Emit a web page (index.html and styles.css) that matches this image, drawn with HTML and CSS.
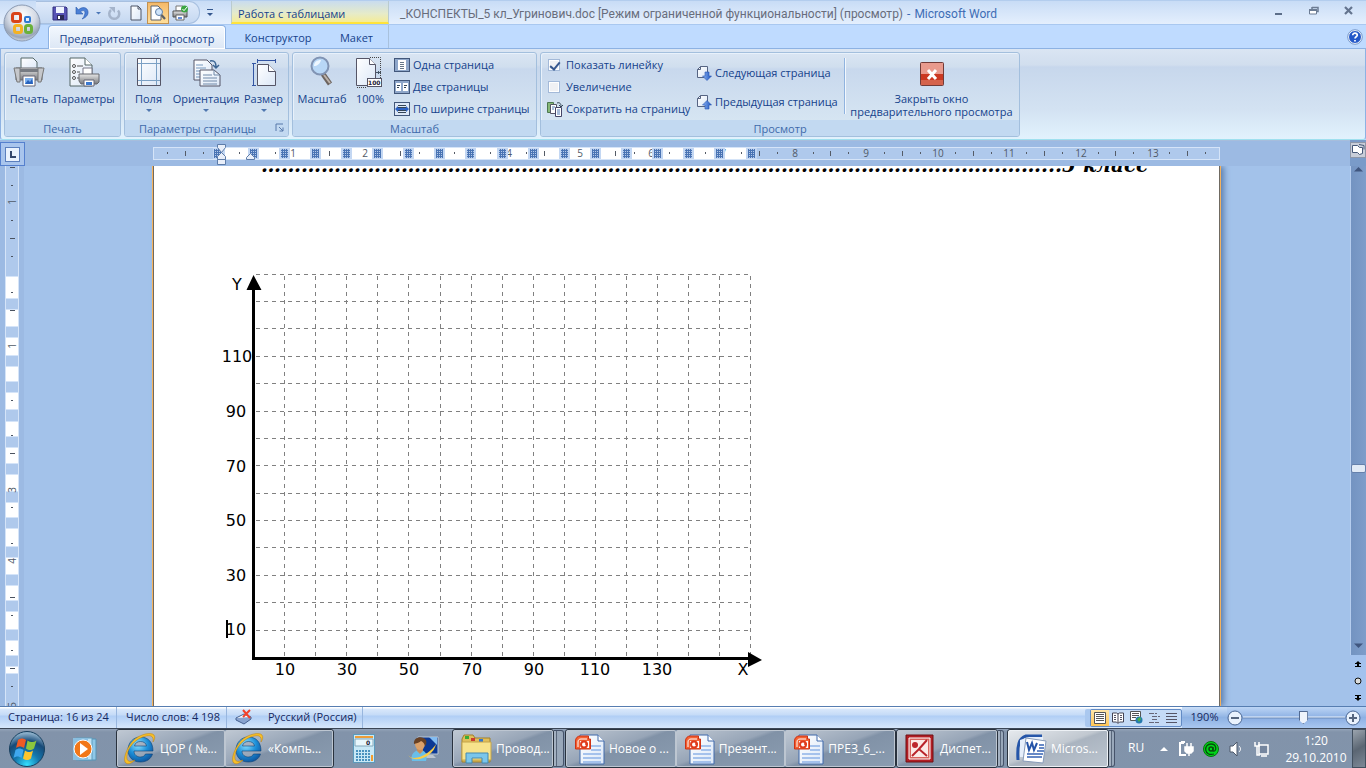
FILE: index.html
```html
<!DOCTYPE html>
<html lang="ru">
<head>
<meta charset="utf-8">
<title>_КОНСПЕКТЫ_5 кл_Угринович.doc - Microsoft Word</title>
<link rel="stylesheet" href="styles.css">
</head>
<body>
<svg class="defs" aria-hidden="true">
  <defs>
    <linearGradient id="paper" x1="0" y1="0" x2="1" y2="1"><stop offset="0" stop-color="#fff"/><stop offset="1" stop-color="#dbe7f7"/></linearGradient>
    <linearGradient id="metal" x1="0" y1="0" x2="0" y2="1"><stop offset="0" stop-color="#e8e8e8"/><stop offset="1" stop-color="#77797d"/></linearGradient>
    <linearGradient id="arrowBlue" x1="0" y1="0" x2="1" y2="0"><stop offset="0" stop-color="#8db6f5"/><stop offset="1" stop-color="#1d52bd"/></linearGradient>
    <radialGradient id="orb" cx=".5" cy=".3" r=".75"><stop offset="0" stop-color="#fff"/><stop offset=".5" stop-color="#d5dbe6"/><stop offset=".8" stop-color="#99a5b8"/><stop offset="1" stop-color="#eef3fa"/></radialGradient>
    <radialGradient id="startOrb" cx=".5" cy=".95" r=".9"><stop offset="0" stop-color="#35e0ff"/><stop offset=".4" stop-color="#1477ad"/><stop offset=".75" stop-color="#174a78"/><stop offset="1" stop-color="#8aaec9"/></radialGradient>
    <radialGradient id="ieBlue" cx=".4" cy=".3" r=".8"><stop offset="0" stop-color="#8fe3ff"/><stop offset=".5" stop-color="#1d8fd8"/><stop offset="1" stop-color="#0b4a94"/></radialGradient>
    <symbol id="ie" viewBox="0 0 32 32">
      <path d="M29 18H10c0 4 3 6 6.500 6 2.500 0 4-1 5-3h7c-1.500 5-6 8-12 8C8.500 29 4 24 4 17S9 4 16.500 4 29 9 29 18zM10.500 13h12c-.5-3-2.800-4.500-6-4.500s-5.500 1.500-6 4.500z" fill="url(#ieBlue)" stroke="#0b4275" stroke-width=".6"/>
      <path d="M11 6C17 1 27-1 30 2c1.500 2 .5 5-1 7 .5-3 0-5-2-6-3-1-9 .5-14 4C6 12 2 20 3 26c1 3 4 3 8 1-4 4-8 5-10 2C-1 24 4 12 11 6z" fill="#f7bf28" stroke="#b97f10" stroke-width=".5"/>
    </symbol>
    <symbol id="ppt" viewBox="0 0 32 32">
      <path d="M7 2h18l6 6v23H7z" fill="url(#paper)" stroke="#3e68aa"/><path d="M25 2v6h6" fill="#fff" stroke="#3e68aa"/>
      <path d="M18 13h10M18 17h10M10 21h18M10 25h18M10 29h18" stroke="#8eb3e8" stroke-width="1.500"/>
      <path d="M2.500 16V8c0-3 2-5 5-5h8v3h2v10z" fill="#f36133" stroke="#ce3214"/><path d="M5 14V9c0-2 1-3 3-3h6" fill="none" stroke="#fff"/>
      <path d="M7 8h9v7H7z" fill="#fff"/><circle cx="11" cy="11.500" r="3" fill="none" stroke="#e03c1c" stroke-width="2"/><path d="M12 11h3" stroke="#e03c1c" stroke-width="1.500"/>
    </symbol>
  </defs>
</svg>

<header class="title-row">
  <div class="qat">
    <button class="qb" aria-label="Сохранить"><svg width="16" height="16"><path d="M1 2h13l1 1v12H1z" fill="#5753b5" stroke="#33307f"/><path d="M4 2h8v6H4z" fill="#eef3ff"/><path d="M5 10h7v5H5z" fill="#2b2a55"/><path d="M6 11h2v3H6z" fill="#fff"/></svg></button>
    <button class="qb" aria-label="Отменить"><svg width="16" height="16"><path d="M2 2v7h7L6.500 6.800C10 4 12 6.500 10.500 10 10 12 9 13 8 14c4-1.500 6.500-4 6-7.500C13.500 2.500 8.500 1 4.500 4.800z" fill="#4b80d6" stroke="#2a58aa" stroke-width=".6"/></svg></button>
    <button class="qb narrow" aria-label="Список отмены"><svg width="7" height="16"><path d="M1 7h5L3.500 9.500z" fill="#4d78b8"/></svg></button>
    <button class="qb" aria-label="Повторить"><svg width="16" height="16"><path d="M5 5a5 5 0 1 0 7 .5" fill="none" stroke="#a5b4cb" stroke-width="2.500"/><path d="M3 2h6v6z" fill="#a5b4cb"/></svg></button>
    <button class="qb" aria-label="Создать"><svg width="16" height="16"><path d="M3 1h7l3 3v11H3z" fill="url(#paper)" stroke="#4d5566"/><path d="M10 1v3h3" fill="none" stroke="#4d5566"/></svg></button>
    <button class="qb pressed" aria-label="Предварительный просмотр"><svg width="16" height="16"><path d="M1 1h7l3 3v11H1z" fill="#fff" stroke="#5b6370"/><circle cx="9" cy="7" r="3.500" fill="#cfe4fa" stroke="#5e7ea8"/><path d="M11.500 10l3.500 4" stroke="#5e6064" stroke-width="2.200"/></svg></button>
    <button class="qb" aria-label="Быстрая печать"><svg width="17" height="16"><path d="M4 1h7v5H4z" fill="#fff" stroke="#777"/><path d="M1 6h14v6H1z" fill="url(#metal)" stroke="#555"/><path d="M4 10h8v5H4z" fill="#fff" stroke="#666"/><path d="M6 12h4v2H6z" fill="#638bd6"/><circle cx="12.500" cy="4" r="3.500" fill="#3ba542"/><path d="M10.500 4l1.500 1.700L15 2" fill="none" stroke="#fff"/></svg></button>
  </div>
  <button class="qat-more" aria-label="Настройка панели"><svg width="8" height="10"><path d="M1 1.500h6" stroke="#34578e"/><path d="M1 5h6L4 8z" fill="#34578e"/></svg></button>
  <div class="context-title">Работа с таблицами</div>
  <div class="doc-title"><span class="doc-name">_КОНСПЕКТЫ_5 кл_Угринович.doc [Режим ограниченной функциональности] (просмотр)</span><span>-</span><span>Microsoft Word</span></div>
  <div class="win-controls">
    <button aria-label="Свернуть"><svg width="12" height="12"><path d="M2 9h7" stroke="#5c6e89" stroke-width="2"/></svg></button>
    <button aria-label="Восстановить"><svg width="12" height="12"><path d="M4 2.500h6v4H8.500M4 2v2" fill="none" stroke="#6c7c94" stroke-width="1.500"/><path d="M1.500 4.500h7v4.500h-7z" fill="#fff" stroke="#6c7c94"/><path d="M1 5h8" stroke="#6c7c94" stroke-width="2"/></svg></button>
    <button aria-label="Закрыть"><svg width="12" height="12"><path d="M2 2l7 7M9 2l-7 7" stroke="#64748e" stroke-width="2.200"/></svg></button>
  </div>
  <button class="office" aria-label="Кнопка Office"><svg width="38" height="38" viewBox="0 0 38 38"><circle cx="19" cy="19" r="18" fill="url(#orb)" stroke="#8a9ab3"/>
    <g fill="none" stroke-width="3"><rect x="9.500" y="9.500" width="8" height="8" rx="2" stroke="#d9441a"/><rect x="22" y="13" width="5" height="5" rx="1" stroke="#2f7ad4" stroke-width="2"/><rect x="11.500" y="21.500" width="7" height="7" rx="2" stroke="#f4b223"/><rect x="22.500" y="21.500" width="6" height="7" rx="2" stroke="#6ab13a"/></g></svg></button>
</header>

<nav class="tabs">
  <button class="tab active">Предварительный просмотр</button>
  <div class="context-tabs"><button class="tab t2">Конструктор</button><button class="tab t3">Макет</button></div>
  <button class="help" aria-label="Справка"><svg width="16" height="16"><circle cx="8" cy="8" r="6.500" fill="#2458c8" stroke="#fff"/><circle cx="8" cy="8" r="7.300" fill="none" stroke="#5f7fb5" stroke-width=".7"/><path d="M5.700 6.300C5.700 3.300 10.500 3.600 10.300 6.300 10.200 7.800 8 7.800 8 9.500M8 11v1.500" fill="none" stroke="#fff" stroke-width="1.700"/></svg></button>
</nav>

<section class="ribbon">
  <div class="group g-print">
    <div class="gbody">
      <button class="big w48"><svg width="32" height="32"><path d="M8 2h12l4 4v8H8z" fill="url(#paper)" stroke="#566"/><path d="M3 12h26v12H3z" fill="url(#metal)" stroke="#66696f"/><path d="M1 12h6v14H4zM25 12h6l-3 14h-3z" fill="#c5c7cb" stroke="#777"/><path d="M7 13h18v3H7z" fill="#777b82"/><path d="M10 20h12v10H10z" fill="#fff" stroke="#667"/><path d="M12 22h8v6h-8z" fill="#7cb0ee"/><path d="M12 28l3-4 2 2 2-3 1 5z" fill="#2862bd"/></svg><span>Печать</span></button>
      <button class="big w64"><svg width="32" height="32"><path d="M2 2h15l7 7v21H2z" fill="url(#paper)" stroke="#566"/><path d="M17 2v7h7" fill="#fff" stroke="#566"/><g fill="none" stroke="#555"><circle cx="6" cy="10" r="1.500"/><circle cx="6" cy="16" r="1.500"/><circle cx="6" cy="22" r="1.500"/><path d="M9 10h6M9 16h3M9 22h2"/></g><path d="M15 12h9v8h-9z" fill="#fff" stroke="#778"/><path d="M11 18h20v8l-2 2H13l-2-3z" fill="url(#metal)" stroke="#66696f"/><path d="M16 24h10v6H16z" fill="#fff" stroke="#667"/><path d="M18 26h6v3h-6z" fill="#3b79d0"/></svg><span>Параметры</span></button>
    </div>
    <div class="glabel">Печать</div>
  </div>
  <div class="group g-page">
    <div class="gbody">
      <button class="big w46"><svg width="32" height="32"><path d="M4.500 2.500h23v27h-23z" fill="url(#paper)" stroke="#556"/><path d="M8.500 3v26M23.500 3v26M5 7.500h22M5 24.500h22" stroke="#7ba0c4"/></svg><span>Поля</span><i class="drop"></i></button>
      <button class="big w68"><svg width="32" height="32"><path d="M4 4h13l5 5v15H4z" fill="url(#paper)" stroke="#556"/><path d="M6 9h7M6 12h10M6 15h10M6 18h5M6 21h5" stroke="#7597bd"/><path d="M10 14h14l6 5v11H10z" fill="url(#paper)" stroke="#556"/><path d="M24 14v5h6M13 19h9M13 22h14M13 25h14M13 28h14" fill="none" stroke="#7089a8"/><path d="M20 5c5-1 6 2 6 6M23 9l3 3 3-3" fill="none" stroke="#3c6694" stroke-width="1.500"/></svg><span>Ориентация</span><i class="drop"></i></button>
      <button class="big w46"><svg width="32" height="32"><path d="M9.500 8.500h11l7 7v14h-18z" fill="url(#paper)" stroke="#556"/><path d="M20.500 8.500v7h7" fill="#fff" stroke="#556"/><path d="M9 4.500h19M9.500 3v4M27.500 3v4M5.500 8v21M4 7.500h4M4 29.500h4" stroke="#3355a3"/></svg><span>Размер</span><i class="drop"></i></button>
    </div>
    <div class="glabel with-launcher">Параметры страницы<button class="launcher" aria-label="Параметры страницы"><svg width="9" height="9"><path d="M1 8V1h7M4 4l4 4M8 4.500V8H4.500" fill="none" stroke="#5678aa"/></svg></button></div>
  </div>
  <div class="group g-zoom">
    <div class="gbody">
      <button class="big w58"><svg width="32" height="32"><path d="M17 18l7 10" stroke="#6d645f" stroke-width="5"/><path d="M18 19l6 8" stroke="#bdb3aa" stroke-width="2"/><circle cx="14" cy="10" r="8.500" fill="#b8d7f6" stroke="#8194b4" stroke-width="2"/><path d="M8 10c0-4 3-6 7-6-1 4-4 6-7 6z" fill="#eef7ff"/></svg><span>Масштаб</span></button>
      <button class="big w38"><svg width="32" height="32"><path d="M2.500 2.500h13l6 6v21h-19z" fill="url(#paper)" stroke="#556"/><path d="M15.500 2.500v6h6" fill="#fff" stroke="#556"/><path d="M16 1.500h10.500V22M3 31.500h10" fill="none" stroke="#444" stroke-dasharray="1 1"/><path d="M22 16.500h5M24.500 15v3" stroke="#456"/><rect x="13.500" y="22.500" width="14" height="8" fill="#fff" stroke="#556"/><text class="mini" x="14" y="29">100</text></svg><span>100%</span></button>
      <div class="stack">
        <button class="small"><svg width="16" height="16"><rect x=".5" y="1.500" width="15" height="13" fill="#8fa7ca" stroke="#42577a"/><path d="M4 3h8v10H4z" fill="#fff"/><path d="M6 5.500h4M6 7.500h4M6 9.500h4M6 11.500h4" stroke="#678"/></svg>Одна страница</button>
        <button class="small"><svg width="16" height="16"><rect x=".5" y="1.500" width="15" height="13" fill="#8fa7ca" stroke="#42577a"/><path d="M2 4h5v8H2zM9 4h5v8H9z" fill="#fff"/><path d="M3 6.500h3M3 8.500h2M10 6.500h3M10 8.500h2" stroke="#345"/></svg>Две страницы</button>
        <button class="small"><svg width="16" height="16"><rect x=".5" y="1.500" width="15" height="13" fill="#dce7f6" stroke="#42577a"/><path d="M4 4.500h8M4 6.500h8M4 9.500h8M4 11.500h8" stroke="#345"/><path d="M1 8l3-3v2h8V5l3 3-3 3V9H4v2z" fill="#2c61c2"/></svg>По ширине страницы</button>
      </div>
    </div>
    <div class="glabel">Масштаб</div>
  </div>
  <div class="group g-view">
    <div class="gbody">
      <div class="stack checks">
        <label class="small"><input type="checkbox" checked>Показать линейку</label>
        <label class="small"><input type="checkbox">Увеличение</label>
        <button class="small"><svg width="16" height="16"><path d="M.5 1.500h6v10h-6z" fill="#87b878" stroke="#4d7850"/><path d="M3.500 3.500h6v9h-6z" fill="#fff" stroke="#556"/><path d="M8.500 6.500h6v9h-6z" fill="#fff" stroke="#446"/><path d="M5 6h3M5 8h2M10 9h3M10 11h3M10 13h3" stroke="#527ab6"/><path d="M10 2c3-1 4 1 4 3M12 4l2 2 2-2" fill="none" stroke="#345"/></svg>Сократить на страницу</button>
      </div>
      <div class="stack pages">
        <button class="small"><svg width="16" height="16"><path d="M4.500 1.500h7v11h-10v-8z" fill="url(#paper)" stroke="#566482"/><path d="M4.500 1.500v3h-3" fill="none" stroke="#566482"/><path d="M9 7h4v4h2.500L11 15.500 6.500 11H9z" fill="url(#arrowBlue)" stroke="#2756b3" stroke-width=".6"/></svg>Следующая страница</button>
        <button class="small"><svg width="16" height="16"><path d="M4.500 1.500h7v11h-10v-8z" fill="url(#paper)" stroke="#566482"/><path d="M4.500 1.500v3h-3" fill="none" stroke="#566482"/><path d="M9 15h4v-4h2.500L11 6.500 6.500 11H9z" fill="url(#arrowBlue)" stroke="#2756b3" stroke-width=".6"/></svg>Предыдущая страница</button>
      </div>
      <div class="vsep"></div>
      <button class="big close"><svg width="32" height="32" viewBox="0 0 32 32"><rect x="4.500" y="6.500" width="23" height="23" rx="1" fill="#e99a8d" stroke="#713b38"/><path d="M5 18h22v11H5z" fill="#cb3821"/><path d="M5 24h22v5H5z" fill="#dc8069" opacity=".6"/><path d="M12 14l8 9M20 14l-8 9" stroke="#fff" stroke-width="3"/></svg><span>Закрыть окно<br>предварительного просмотра</span></button>
    </div>
    <div class="glabel">Просмотр</div>
  </div>
</section>

<main class="work">
  <button class="tabstop" aria-label="Позиция табуляции"><svg width="15" height="15"><rect x=".5" y=".5" width="14" height="14" fill="#eaf2fd" stroke="#5b7fbd"/><path d="M6 4v6h5" fill="none" stroke="#34476c" stroke-width="2"/></svg></button>
  <div class="hruler">
    <svg width="1067" height="26" viewBox="153 140 1067 26">
      <defs><pattern id="cells" width="2" height="2" patternUnits="userSpaceOnUse"><rect width="2" height="2" fill="#b4caea"/><path d="M0 .5h2M.5 0v2" stroke="#4a74b4" stroke-width="1"/></pattern></defs>
      <rect x="153.500" y="147.500" width="1066" height="12" fill="#afc9ec" stroke="#d5e4f8"/>
      <path d="M221 148h530v11H221z" fill="#fff"/>
      <path d="M167.500 152v2M203.500 152v2M239.500 152v2M275.500 152v2M419.500 152v2M454.500 152v2M490.500 152v2M526.500 152v2M562.500 152v2M598.500 152v2M634.500 152v2M669.500 152v2M705.500 152v2M741.500 152v2M777.500 152v2M813.500 152v2M848.500 152v2M884.500 152v2M920.500 152v2M955.500 152v2M991.500 152v2M1026.500 152v2M1062.500 152v2M1098.500 152v2M1133.500 152v2M1169.500 152v2M1205.500 152v2M185.500 151v5M329.500 151v5M400.500 151v5M472.500 151v5M544.500 151v5M615.500 151v5M759.500 151v5M830.500 151v5M902.500 151v5M973.500 151v5M1044.500 151v5M1115.500 151v5M1187.500 151v5" stroke="#555b66"/>
      <g class="num"><text x="293" y="157">1</text><text x="365" y="157">2</text><text x="437" y="157">3</text><text x="509" y="157">4</text><text x="580" y="157">5</text><text x="651" y="157">6</text><text x="723" y="157">7</text><text x="795" y="157">8</text><text x="866" y="157">9</text><text x="938" y="157">10</text><text x="1009" y="157">11</text><text x="1081" y="157">12</text><text x="1153" y="157">13</text></g>
      <path d="M213 153.500h12M248 153.500h11M279 153.500h11M310 153.500h11M341 153.500h11M372 153.500h11M403 153.500h11M434 153.500h11M465 153.500h11M497 153.500h11M528 153.500h11M559 153.500h11M590 153.500h11M621 153.500h11M652 153.500h11M683 153.500h11M714 153.500h11M746 153.500h11" stroke="#c3d7f3" stroke-width="11"/>
      <path d="M214 153.500h8M250 153.500h7M281 153.500h7M312 153.500h7M343 153.500h7M374 153.500h7M405 153.500h7M436 153.500h7M467 153.500h7M499 153.500h7M530 153.500h7M561 153.500h7M592 153.500h7M623 153.500h7M654 153.500h7M685 153.500h7M716 153.500h7M748 153.500h7" stroke="url(#cells)" stroke-width="9"/>
      <g fill="#e9effa" stroke="#5d7ca9"><path d="M217.500 144.500h8v3l-4 5-4-5zM217.500 159.500v-3l4-4 4 4v3zM217.500 159.500h8v5h-8zM246.500 159.500v-2l4-4 4 4v2z"/></g>
    </svg>
  </div>
  <div class="corner"><button aria-label="Линейка"><svg width="16" height="16"><rect x=".5" y=".5" width="15" height="15" fill="#c9ced9" stroke="#8d96a8"/><path d="M2.500 3.500h5l2 2h3v6l-3 1-2-2h-5z" fill="#fff" stroke="#465878"/><path d="M9 2.500l5 1v4" fill="none" stroke="#465878"/></svg></button></div>

  <div class="vruler">
    <svg width="24" height="560" viewBox="0 166 24 560">
      <path d="M5.500 166v560M18.500 166v560" stroke="#d5e4f8"/><path d="M6 166h12v560H6z" fill="#afc9ec"/>
      <path d="M12 276v23M12 309v18M12 337v19M12 366v16M12 392v18M12 421v16M12 447v17M12 474v18M12 502v16M12 528v19M12 557v18M12 585v16M12 611v19M12 640v16M12 666v8" stroke="#d5e4f8" stroke-width="12"/>
      <path d="M12 277v21M12 310v16M12 338v17M12 367v14M12 393v16M12 422v14M12 448v15M12 475v16M12 503v14M12 529v17M12 558v16M12 586v14M12 612v17M12 641v14M12 667v6" stroke="#fff" stroke-width="12"/>
      <path d="M10 167.500h5M11 185.500h2M11 220.500h2M10 238.500h5M11 256.500h2M11 292.500h2M10 310.500h5M11 400.500h2M11 435.500h2M10 453.500h5M11 507.500h2M11 543.500h2M10 597.500h5M11 615.500h2M11 650.500h2M10 668.500h5M11 686.500h2" stroke="#4b5360"/>
      <g class="num"><text transform="translate(16 202) rotate(-90)">1</text><text transform="translate(16 346) rotate(-90)">1</text><text transform="translate(16 490) rotate(-90)">3</text><text transform="translate(16 561) rotate(-90)">4</text><text transform="translate(16 705) rotate(-90)">5</text></g>
    </svg>
  </div>
  <div class="canvas">
    <article class="page">
      <p class="heading">………………………………………………………………………………………………………...5 класс</p>
      <svg class="chart" width="548" height="416" viewBox="220 268 548 416" role="img" aria-label="Координатная сетка">
        <path d="M256 274.500h495M256 301.500h495M256 328.500h495M256 356.500h495M256 383.500h495M256 411.500h495M256 438.500h495M256 465.500h495M256 493.500h495M256 520.500h495M256 547.500h495M256 575.500h495M256 602.500h495M256 630.500h495M284.500 276v381M315.500 276v381M346.500 276v381M377.500 276v381M408.500 276v381M440.500 276v381M471.500 276v381M502.500 276v381M533.500 276v381M564.500 276v381M595.500 276v381M626.500 276v381M657.500 276v381M688.500 276v381M719.500 276v381M750.500 276v381" fill="none" stroke="#808080" stroke-dasharray="4 4"/>
        <path d="M253.500 284v374.500H750" fill="none" stroke="#000" stroke-width="3"/><path d="M253.500 275l8 15h-15zM762 660l-14-8v15z"/>
        <g class="lab"><text x="237" y="290">Y</text><text x="237" y="362">110</text><text x="236" y="417">90</text><text x="236" y="472">70</text><text x="236" y="526">50</text><text x="236" y="581">30</text><text x="236" y="635">10</text>
        <text x="285" y="675">10</text><text x="347" y="675">30</text><text x="409" y="675">50</text><text x="472" y="675">70</text><text x="534" y="675">90</text><text x="595" y="675">110</text><text x="657" y="675">130</text><text x="743" y="675">X</text></g>
        <path d="M227 620v18" stroke="#000" stroke-width="2"/>
      </svg>
    </article>
  </div>
  <div class="vscroll">
    <div class="track">
      <button class="arr" aria-label="Вверх"><svg width="10" height="6"><path d="M0 5.500h9L4.500 1z" fill="#40567f"/></svg></button>
      <div class="above"></div><div class="thumb"></div><div class="below"></div>
      <button class="arr" aria-label="Вниз"><svg width="10" height="6"><path d="M0 .5h9L4.500 5z" fill="#40567f"/></svg></button>
    </div>
    <button class="nav" aria-label="Предыдущая"><svg width="8" height="8"><path d="M2 3h4L4 1zM1 3h6v1H1zM3 4h2v2H3zM1 6h6v1H1z"/></svg></button>
    <button class="nav" aria-label="Выбор объекта"><svg width="8" height="8"><circle cx="4" cy="4" r="3" fill="#ddd" stroke="#111"/></svg></button>
    <button class="nav" aria-label="Следующая"><svg width="8" height="8"><path d="M1 1h6v1H1zM3 2h2v2H3zM1 4h6v1H1zM2 5h4L4 7z"/></svg></button>
  </div>
</main>

<footer class="status">
  <span class="s1">Страница: 16 из 24</span><span class="s2">Число слов: 4 198</span>
  <span class="s3"><svg width="18" height="16"><path d="M1 9l8-4 7 3-7 5z" fill="#fff" stroke="#46608f"/><path d="M1 9v2l8 4 7-5V8" fill="#88a3cf" stroke="#46608f"/><path d="M8 1l7 8M15 1L8 8" stroke="#f2432c" stroke-width="2"/></svg></span><span class="s4">Русский (Россия)</span>
  <div class="views">
    <button class="on" aria-label="Разметка"><svg width="12" height="12"><path d="M.5.5h11v11H.5z" fill="#fff" stroke="#555"/><path d="M2 2.500h8M2 4.500h8M2 6.500h8M2 8.500h8" stroke="#555"/></svg></button>
    <button aria-label="Чтение"><svg width="12" height="12"><path d="M.5 1h4L6 2l1.500-1h4v9h-4L6 11.500 4.500 10h-4zM6 2v9" fill="#fff" stroke="#445"/><path d="M2 3.500h2M2 5.500h2M2 7.500h2M8 3.500h2M8 5.500h2M8 7.500h2" stroke="#556"/></svg></button>
    <button aria-label="Веб"><svg width="13" height="13"><path d="M.5.5h10v9H.5z" fill="#fff" stroke="#555"/><path d="M2 2.500h7M2 4.500h7M2 6.500h4" stroke="#555"/><circle cx="9" cy="9" r="3.500" fill="#2479ae"/><path d="M7 8l3-2 1 2-2 3z" fill="#49b24a"/></svg></button>
    <button aria-label="Структура"><svg width="12" height="12"><path d="M1 1.500h8M4 4.500h8M4 7.500h6M1 10.500h10" stroke="#667" stroke-dasharray="5 1"/></svg></button>
    <button aria-label="Черновик"><svg width="12" height="12"><path d="M0 1.500h11M0 4.500h11M0 7.500h11M0 10.500h11" stroke="#556"/></svg></button>
  </div>
  <span class="pct">190%</span>
  <button class="round" aria-label="Уменьшить"><svg width="16" height="16"><circle cx="8" cy="8" r="7" fill="#e9f2fd" stroke="#486694"/><path d="M4 8h8" stroke="#56667f" stroke-width="2"/></svg></button>
  <input class="slider" type="range" min="0" max="100" value="60" aria-label="Масштаб">
  <button class="round" aria-label="Увеличить"><svg width="16" height="16"><circle cx="8" cy="8" r="7" fill="#e9f2fd" stroke="#486694"/><path d="M4 8h8M8 4v8" stroke="#56667f" stroke-width="2"/></svg></button>
</footer>

<div class="taskbar">
  <button class="start" aria-label="Пуск"><svg width="38" height="38" viewBox="0 0 38 38"><circle cx="19" cy="19" r="17.500" fill="url(#startOrb)" stroke="#18405f"/><path d="M10 10c3-2 5-2 8 0l-2 8c-3-2-5-2-8 0z" fill="#ef5a24"/><path d="M19.500 10.500c3 2 6 2 9 0l-2.500 8c-3 2-5 2-8 0z" fill="#8cc63e"/><path d="M7.500 20c3-2 5-2 8 0l-2 8c-3-2-5-2-8 0z" fill="#3fa7ee"/><path d="M17 20.500c3 2 5 2 8 0l-2 8c-3 2-5 2-8 0z" fill="#fdc52c"/></svg></button>
  <button class="quick q1" aria-label="Проигрыватель"><svg width="28" height="28"><path d="M8 4h17v21H8z" fill="#8fc8e8" stroke="#5793b5"/><path d="M5 3h16v22H5z" fill="#bfe3f5" stroke="#5f9cbd"/><path d="M2 3h15v22H2z" fill="#8abfe0"/><circle cx="12" cy="14" r="9" fill="#f27718" stroke="#fff"/><path d="M9 8l8 6-8 6z" fill="#fff"/></svg></button>
  <div class="tgroup w218"><button class="task"><svg width="32" height="32"><use href="#ie"/></svg><span>ЦОР ( №...</span></button><button class="task"><svg width="32" height="32"><use href="#ie"/></svg><span>«Компь...</span></button></div>
  <button class="quick q2" aria-label="Калькулятор"><svg width="24" height="32"><rect x="1.500" y="1.500" width="21" height="28" fill="#c8e8f6" stroke="#5c9abc"/><path d="M3 3h18v2H3z" fill="#ed9d38"/><path d="M3 6h18v7H3z" fill="#e9f7fc" stroke="#82a7ba"/><text class="mini" x="14" y="12">0</text><path d="M4 18h14M4 21h14M4 24h14M4 27h14" stroke="#4a92bf" stroke-width="2" stroke-dasharray="2 1"/><path d="M20 22v6" stroke="#f39d2e" stroke-width="2"/></svg></button>
  <button class="quick q3" aria-label="Пользователь"><svg width="32" height="28"><path d="M11 2h20v17H11z" fill="#0b3894" stroke="#bac6d4"/><path d="M22 2l8 8V2z" fill="#83bdf2"/><path d="M20 20h6l3 3H18z" fill="#bcc5cf"/><path d="M5 26c-2-7 3-11 8-11s8 4 6 11z" fill="#69bee9"/><path d="M10 12h6v4l-3 3-3-3z" fill="#c98d58"/><ellipse cx="13" cy="9" rx="5" ry="6" fill="#dca16a"/><path d="M7 9c-1-7 8-9 12-4 1 3 0 5-1 6-1-3-2-4-4-5-2 2-5 2-7 3z" fill="#684125"/><path d="M1 20c6 8 23-2 28-11-2 12-21 21-28 11z" fill="#f8cc48"/></svg></button>
  <div class="tgroup w102"><button class="task"><svg width="32" height="32"><path d="M2 6l2-4h9l2 3h15v24H2z" fill="#e0be5a" stroke="#9f802c"/><path d="M5 3h4v3H5z" fill="#3aac35"/><path d="M11 5h4v3h-4z" fill="#cc3b2e"/><path d="M19 6h4v3h-4z" fill="#3376cd"/><path d="M2 9h29v18H2z" fill="#f7e38c" stroke="#c4a44a"/><path d="M6 20h22v10h-6v-5H12v5H6z" fill="#7ac6ec" stroke="#4489b0"/></svg><span>Провод...</span></button></div>
  <div class="edges e3"></div>
  <div class="tgroup w331"><button class="task"><svg width="32" height="32"><use href="#ppt"/></svg><span>Новое о ...</span></button><button class="task"><svg width="32" height="32"><use href="#ppt"/></svg><span>Презент...</span></button><button class="task"><svg width="32" height="32"><use href="#ppt"/></svg><span>ПРЕЗ_6_...</span></button></div>
  <div class="tgroup w102"><button class="task"><svg width="32" height="32"><path d="M2 2h27v27H2z" fill="#b31e24" stroke="#6f1015"/><path d="M5 5h21v21H5z" fill="#d8645d" stroke="#fff"/><path d="M7 7h17v17H7z" fill="#fbeae6"/><circle cx="11" cy="12" r="3" fill="#bd272c"/><path d="M8 23l7-7 8 7M15 16l8-9" fill="none" stroke="#b9242a" stroke-width="2"/></svg><span>Диспет...</span></button></div>
  <div class="edges e2"></div>
  <div class="tgroup w102 active-win"><button class="task"><svg width="32" height="32"><path d="M3 27C2 12 4 5 11 3h16" fill="none" stroke="#2556a9" stroke-width="3"/><path d="M5 7l9-3h14v20H5z" fill="#e6effb"/><path d="M11 5l20 3-3 22-20-2z" fill="#fff" stroke="#879bb9"/><path d="M12 9l2 8 3-7 2 7 3-7" fill="none" stroke="#2554a8" stroke-width="2"/><path d="M24 12h5M24 15h5M22 18h7M12 21h16M12 24h15" stroke="#3462b4" stroke-width="1.500"/></svg><span>Micros...</span></button></div>
  <div class="edges e2"></div>
  <div class="tray">
    <span class="lang">RU</span>
    <button aria-label="Скрытые значки"><svg width="10" height="16"><path d="M1 10h8L5 6z" fill="#fff"/></svg></button>
    <button aria-label="Питание"><svg width="16" height="16"><path d="M6 2H2v12h6" fill="none" stroke="#fff" stroke-width="2"/><path d="M3 1h4" stroke="#fff" stroke-width="2"/><path d="M7 6h8v4l-2 2H9l-2-2zM9 2v4M13 2v4M11 12v3" fill="#fff" stroke="#fff" stroke-width="1.500"/></svg></button>
    <button aria-label="Агент"><svg width="16" height="16"><circle cx="8" cy="8" r="7.500" fill="#00d619" stroke="#06720e"/><circle cx="8" cy="8" r="2" fill="none" stroke="#064c0c" stroke-width="1.500"/><path d="M11 13C1 16 0 3 8 3c6 0 6 8 2 7V6" fill="none" stroke="#064c0c" stroke-width="1.300"/></svg></button>
    <button aria-label="Громкость"><svg width="16" height="16"><path d="M2 5h3l4-4v14l-4-4H2z" fill="#fff" stroke="#4d596b"/><path d="M11 5c2 2 2 4 0 6" fill="none" stroke="#fff"/></svg></button>
    <button aria-label="Сеть"><svg width="17" height="16"><path d="M6 4h9v9H6z" fill="#75869e" stroke="#fff" stroke-width="1.500"/><path d="M8 15h6M2 1v4h4V1M4 5v9h3" fill="none" stroke="#fff" stroke-width="1.500"/></svg></button>
    <div class="clock"><time>1:20</time><span>29.10.2010</span></div>
    <button class="desk" aria-label="Показать рабочий стол"></button>
  </div>
</div>
</body>
</html>
```
FILE: styles.css
```css
* { box-sizing: border-box; }
body { margin: 0; height: 100vh; display: flex; flex-direction: column; overflow: hidden; font: 11px/16px "Open Sans", "Noto Sans", sans-serif; color: #15428b; background: #bfdbff; }
button { margin: 0; padding: 0; border: 0; background: none; font: inherit; color: inherit; }
svg { display: block; flex: none; }
.defs { position: absolute; width: 0; height: 0; }
.mini { font: bold 6px "DejaVu Sans", sans-serif; fill: #223; }

.title-row { position: relative; display: flex; height: 25px; flex: none; background: linear-gradient(#c8dcf6, #d4e4f9 40%, #e4effd); border-top: 1px solid #b3cdee; border-bottom: 1px solid #a9c8f0; }
.qat { display: flex; align-items: center; margin-left: 36px; width: 164px; padding-left: 13px; border-radius: 0 11px 11px 0; border: 1px solid #a8c0e0; border-left: 0; height: 23px; background: linear-gradient(#dfeafa, #c5d8f1); }
.qb { width: 22px; height: 22px; display: flex; align-items: center; justify-content: center; }
.qb.narrow { width: 10px; }
.qb.pressed { background: linear-gradient(#f5b969, #ffdf9b); border: 1px solid #c29150; }
.qat-more { width: 20px; display: flex; align-items: center; justify-content: center; }
.context-title { margin-left: 11px; width: 158px; padding: 5px 0 0 6px; border: 1px solid #b9cbd0; border-width: 0 1px; background: linear-gradient(#c9dcef, #e6ebc9 60%, #f5ec97); border-bottom: 2px solid #ffe33c; white-space: nowrap; }
.doc-title { flex: 1; display: flex; gap: 4px; padding: 5px 0 0 11px; white-space: nowrap; color: #3e6db5; font: 12px/16px Roboto, "Open Sans", sans-serif; }
.doc-name { color: #686d7c; }
.win-controls { display: flex; gap: 23px; padding: 4px 11px 0 0; align-items: flex-start; }
.office { position: absolute; left: 3px; top: 3px; z-index: 2; }

.tabs { display: flex; flex: none; height: 24px; padding-left: 48px; background: #bfdbff; border-bottom: 1px solid #8db2e3; }
.tab { height: 24px; line-height: 22px; padding-top: 2px; white-space: nowrap; }
.tab.active { width: 178px; border: 1px solid #8db2e3; border-bottom: 0; border-radius: 4px 4px 0 0; background: linear-gradient(#f3f8fe, #dce7f5); box-shadow: inset 0 0 0 1px #fff; }
.context-tabs { display: flex; width: 163px; padding-left: 5px; border-right: 1px solid #a8c1dd; }
.t2 { width: 94px; }
.t3 { width: 63px; }
.help { margin-left: auto; padding-right: 3px; }

.ribbon { display: flex; gap: 3px; flex: none; height: 91px; padding: 3px; border: 1px solid #8db2e3; border-top: 0; border-radius: 0 0 3px 3px; background: linear-gradient(#dae5f3, #d1deee 16px, #c7d7ec 18px, #d3e2f2 60px, #e2f2fd); border-bottom-color: #9fe0ef; }
.group { display: flex; flex-direction: column; height: 85px; border: 1px solid #a3bfdd; border-radius: 3px; background: linear-gradient(#dae5f3, #d0deee 14px, #c8d8ed 16px, #d6e5f2 68px); box-shadow: inset 1px 1px 0 #e8f1fb; overflow: hidden; }
.g-print { width: 117px; }
.g-page { width: 165px; }
.g-zoom { width: 245px; }
.g-view { width: 480px; }
.gbody { display: flex; height: 68px; padding-top: 1px; }
.glabel { position: relative; height: 16px; line-height: 17px; text-align: center; color: #3e6aaa; background: #c2d9f1; }
.with-launcher { padding-right: 18px; }
.launcher { position: absolute; right: 4px; top: 3px; }
.big { display: flex; flex-direction: column; align-items: center; white-space: nowrap; height: 66px; line-height: 14px; padding-top: 2px; }
.big span { padding-top: 4px; }
.w48 { width: 48px; }
.w64 { width: 62px; }
.w68 { width: 68px; }
.w46 { width: 47px; }
.w58 { width: 58px; }
.w38 { width: 38px; }
.drop { margin-top: 3px; border: 3px solid transparent; border-top-color: #5078b0; border-bottom: 0; }
.stack { display: flex; flex-direction: column; }
.small { display: flex; align-items: center; gap: 3px; height: 22px; white-space: nowrap; }
.g-zoom .stack { margin-left: 5px; }
.checks { width: 150px; padding-left: 6px; }
.checks input { appearance: none; margin: 0 3px 0 1px; width: 12px; height: 12px; border: 1px solid #a3b9d8; background: #f0f1f4; box-shadow: inset 0 0 0 1px #fff; }
.checks input:checked { position: relative; }
.checks input:checked::after { content: ""; position: absolute; left: 3px; top: 0; width: 4px; height: 8px; border: solid #37588f; border-width: 0 2px 2px 0; transform: rotate(40deg); }
.pages { padding: 8px 0 0 5px; gap: 7px; width: 153px; }
.vsep { width: 2px; height: 56px; margin-top: 4px; background: #90b3df; border-right: 1px solid #f2f7fd; margin-right: -2px; }
.close { flex: 1; line-height: 13px; }

.work { flex: 1; min-height: 0; display: grid; grid-template-columns: 24px 1fr 16px; grid-template-rows: 26px 1fr; background: #9cbae3; }
.tabstop { width: 25px; height: 24px; margin-top: 2px; border: 1px solid #5580ce; display: flex; align-items: center; justify-content: center; background: #a9c5ed; }
.hruler { display: flex; justify-content: center; padding-right: 1px; box-shadow: inset 0 1px #a7bddc; }
.corner { background: #7a9bc9; padding-top: 2px; }
.num { font: 10px "Open Sans", sans-serif; fill: #505967; text-anchor: middle; }
.vruler { overflow: hidden; background: #9cbae3; }
.canvas { overflow: hidden; display: flex; justify-content: center; padding-right: 1px; background: #a3c2ea; }
.page { width: 1067px; background: #fff; border: 1px solid #6f6a62; border-width: 0 1px; box-shadow: -1px 0 0 #f4b25e, 1px 0 0 #f4b25e, 4px 0 6px #5c80b0; overflow: hidden; }
.heading { margin: -13px 0 0 107px; height: 20px; white-space: nowrap; font: italic bold 20px/24px "DejaVu Serif", serif; color: #000; }
.chart { margin: 95px 0 0 66px; }
.lab { font: 16px "DejaVu Sans", sans-serif; text-anchor: middle; fill: #000; }
.vscroll { display: flex; flex-direction: column; background: #a3c2ee; }
.track { flex: 1; display: flex; flex-direction: column; align-items: center; background: linear-gradient(90deg, #7393c1, #7e9dca); border-left: 1px solid #b5cdef; }
.arr { height: 12px; display: flex; justify-content: center; }
.above { flex: 62; }
.below { flex: 37; }
.thumb { width: 15px; height: 9px; border: 1px solid #6580ab; border-radius: 2px; background: #e1eaf6; }
.nav { height: 17px; display: flex; align-items: center; justify-content: center; }

.status { display: flex; align-items: center; flex: none; height: 22px; border-top: 1px solid #567db1; color: #15285f; background: linear-gradient(#fff 1px, #d9e8fb 2px, #c5dbf7 8px, #b0cef5 9px, #d6e7fb); white-space: nowrap; }
.status > span { height: 21px; line-height: 20px; }
.s1 { width: 117px; padding-left: 8px; border-right: 1px solid #98b6de; }
.s2 { width: 110px; padding-left: 9px; border-right: 1px solid #98b6de; }
.s3 { width: 32px; padding: 2px 0 0 8px; }
.s4 { width: 104px; padding-left: 9px; border-right: 1px solid #98b6de; }
.views { margin-left: auto; display: flex; width: 92px; height: 18px; border: 1px solid #628bc5; border-radius: 2px; background: #c5dbf6; box-shadow: -5px 0 0 #aac8ef; }
.views button { flex: 1; display: flex; align-items: center; justify-content: center; }
.views .on { background: linear-gradient(#ffe6a9, #ffc555); }
.status .pct { width: 45px; text-align: center; background: linear-gradient(#cbdff8, #8eb2e3 50%, #a9c7f0); }
.slider { appearance: none; width: 102px; height: 21px; margin: 0; background: linear-gradient(#bcd5f5, #93b5e6 9px, #e8f1fc 10px, #6788b8 11px, #8eb1e4 12px, #a9c7f0); }
.slider::-webkit-slider-thumb { appearance: none; width: 9px; height: 13px; background: #eef3fb; border: 1px solid #526a92; clip-path: polygon(0 0, 100% 0, 100% 70%, 50% 100%, 0 70%); }
.round { height: 21px; display: flex; align-items: center; background: linear-gradient(#bcd5f5, #8eb1e4 50%, #a9c7f0); }
.round:last-child { padding-right: 5px; }

.taskbar { display: flex; flex: none; height: 40px; border-top: 1px solid #3b4656; background: linear-gradient(#93a3b8, #8293aa 3px, #8194ab); color: #fff; font-size: 12px; white-space: nowrap; }
.start { width: 54px; display: flex; align-items: center; justify-content: center; }
.quick { display: flex; align-items: center; justify-content: center; }
.q1 { width: 62px; }
.q2 { width: 60px; }
.q3 { width: 58px; }
.tgroup { display: flex; border: 1px solid #29323e; border-radius: 3px; }
.w218 { width: 218px; }
.w102 { width: 102px; }
.w331 { width: 331px; }
.task { flex: 1; min-width: 0; display: flex; align-items: center; gap: 4px; padding: 0 4px 0 6px; background: linear-gradient(160deg, #bec7d2, #97a5b7 45%, #8192a7 50%, #8a9cb0); border: 1px solid #bdc6d1; border-radius: 2px; }
.active-win .task { background: linear-gradient(160deg, #e5e9ed, #c1c8d0 45%, #aab4c0 50%, #bcc5cf); border-color: #edf1f5; }
.edges { margin: 1px 0; border: 1px solid #46536a; border-left: 0; border-radius: 0 3px 3px 0; background: linear-gradient(90deg, #a4b1c1 2px, #59677b 2px 3px, #99a8ba 3px); }
.e3 { width: 10px; margin-right: 1px; }
.e2 { width: 6px; margin-right: 3px; }
.tray { margin-left: auto; display: flex; align-items: center; gap: 9px; }
.lang { width: 22px; height: 24px; line-height: 22px; }
.clock { display: flex; flex-direction: column; align-items: center; width: 68px; line-height: 17px; margin: 0 -7px 0 3px; }
.desk { width: 14px; height: 39px; border: 1px solid #42505f; background: linear-gradient(150deg, #9ba4ae, #5b6673 50%, #7d8997); }
```
